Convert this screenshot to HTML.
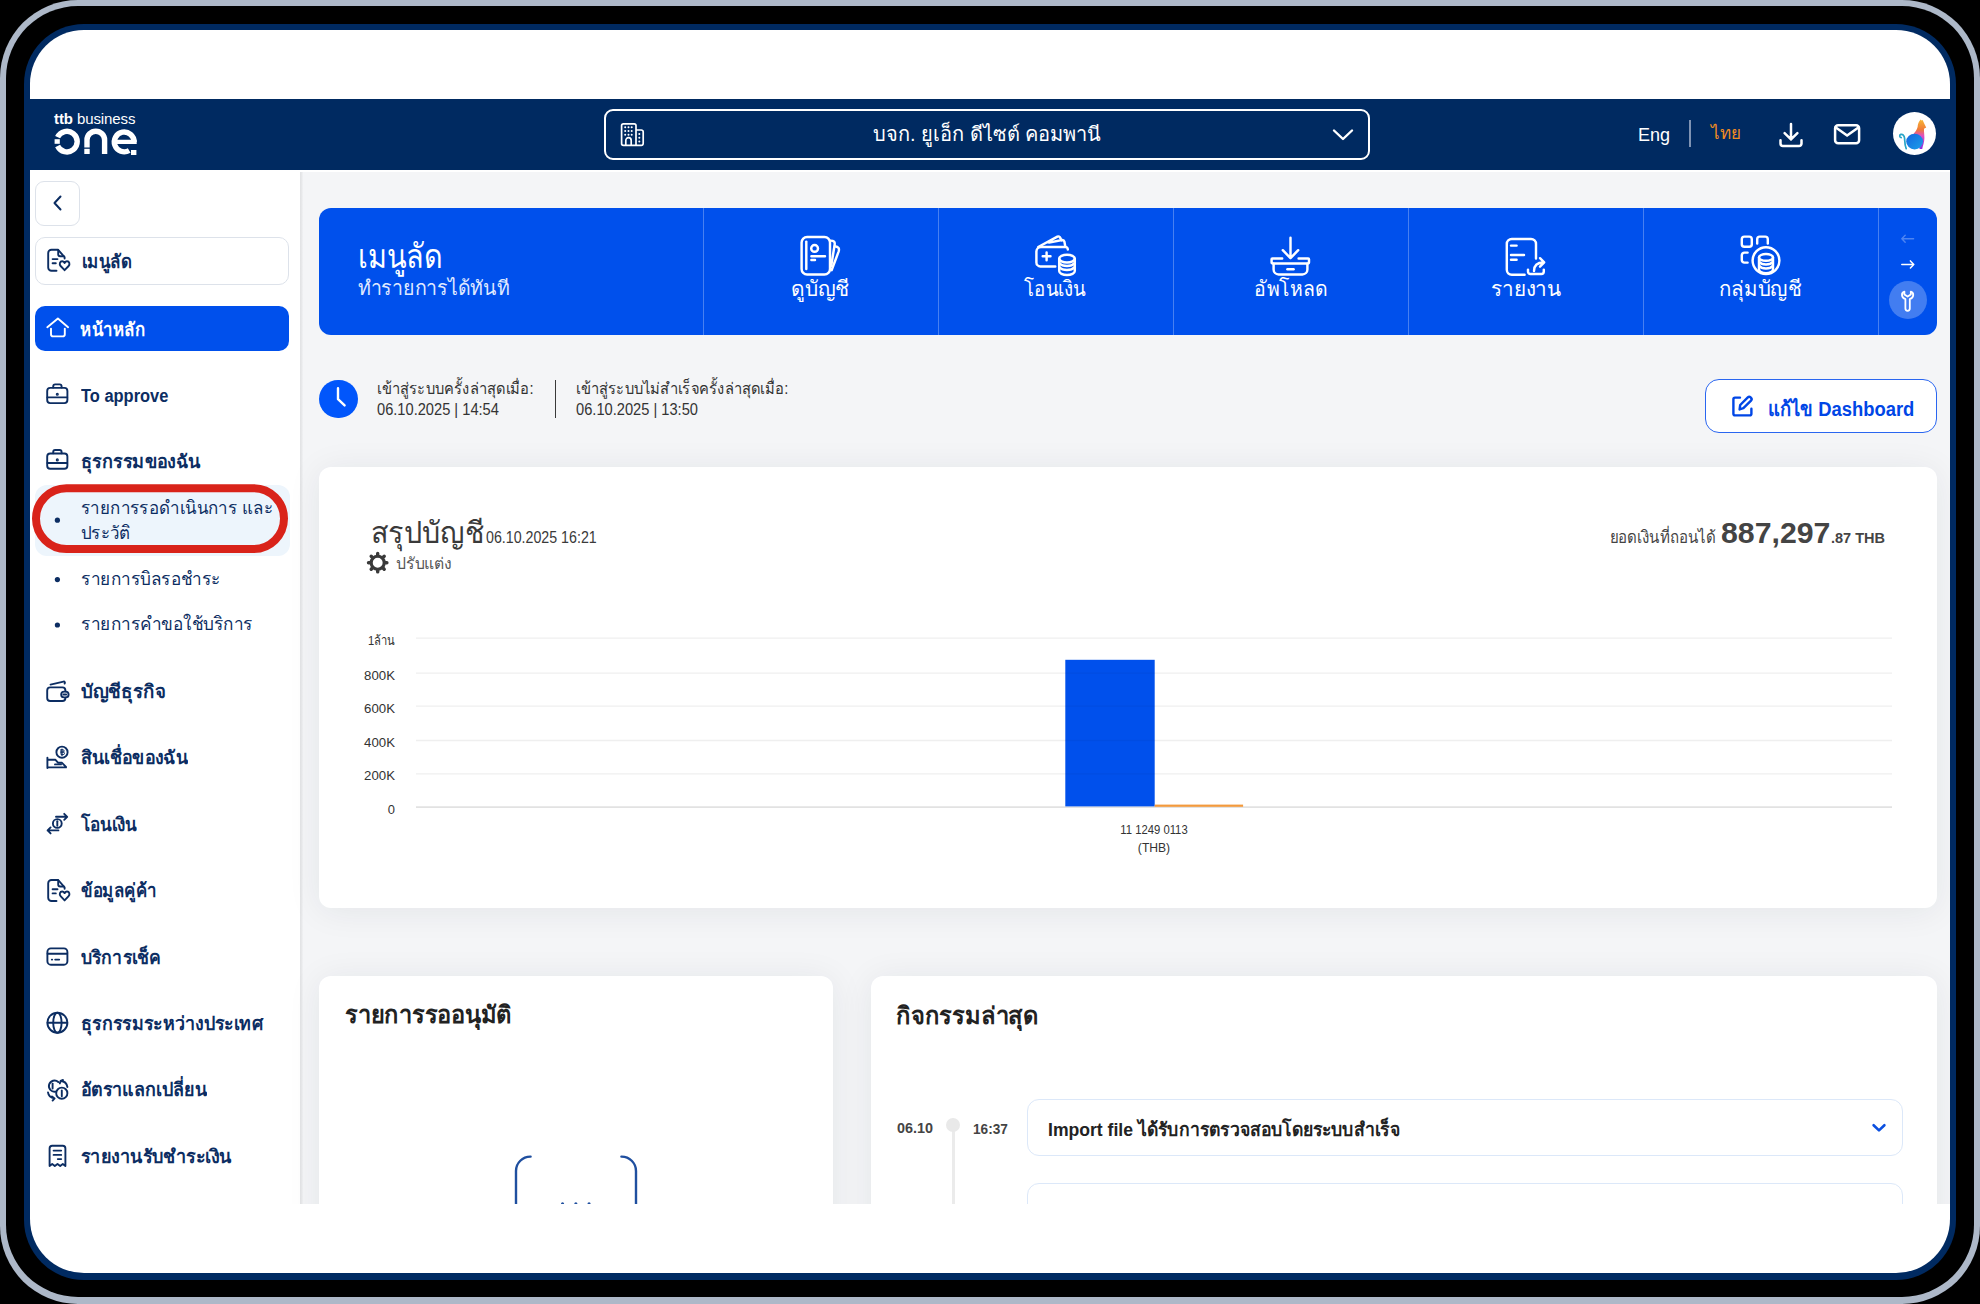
<!DOCTYPE html>
<html><head><meta charset="utf-8">
<style>
*{box-sizing:border-box;margin:0;padding:0}
html,body{width:1980px;height:1304px;overflow:hidden;background:#000}
body{font-family:"Liberation Sans",sans-serif;position:relative}
.a{position:absolute}
#grey{left:0;top:0;width:1980px;height:1304px;border-radius:78px;background:#adb8c8}
#blk{left:6px;top:6px;width:1968px;height:1291px;border-radius:72px;background:#000}
#ring{left:24px;top:24px;width:1932px;height:1256px;border-radius:60px;background:#002a61}
#screen{left:0;top:0;width:1980px;height:1304px;background:#fff;clip-path:inset(30px 30px 31px 30px round 54px)}
#content{left:0;top:0;width:1980px;height:1204px;overflow:hidden}
svg.ov{position:absolute;left:0;top:0}
</style></head>
<body>
<div id="grey" class="a"></div>
<div id="blk" class="a"></div>
<div id="ring" class="a"></div>
<div id="screen" class="a">
<div id="content" class="a">
<div class="a" style="left:30px;top:99px;width:1920px;height:71px;background:#002a61"></div>
<div class="a" style="left:54px;top:110px;width:90px;font-size:15px;font-weight:bold;color:#fff;letter-spacing:-0.1px;white-space:nowrap">ttb <span style="font-weight:normal">business</span></div>
<svg class="a" style="left:54px;top:128px" width="84" height="28" viewBox="0 0 84 28">
  <g fill="none" stroke="#fff" stroke-width="5.4">
    <path d="M3.6 9.2 A10.3 10.3 0 1 1 3.6 18.0"/>
    <path d="M33 19.6 V12 A8.8 8.8 0 0 1 50.6 12 V26"/>
    <path d="M80.1 13.9 A9.9 9.9 0 1 0 75.2 22.5"/><path d="M60 13.9 H82.7" stroke-width="4.2"/>
  </g>
  <rect x="0.6" y="11.2" width="5.2" height="4.6" fill="#fff"/>
  <rect x="30.3" y="20.8" width="5.4" height="5.2" fill="#fff"/>
  <rect x="77" y="22" width="5.4" height="5" fill="#fff"/>
</svg>
<div class="a" style="left:604px;top:109px;width:766px;height:51px;border:2.5px solid #fff;border-radius:9px"></div>
<svg class="a" style="left:612px;top:116px" width="40" height="36" viewBox="612 116 40 36" fill="none" stroke="#fff" stroke-width="1.7" stroke-linecap="round" stroke-linejoin="round">
  <path d="M636 145.4 V125.6 A1.8 1.8 0 0 0 634.2 123.8 H623.4 A1.8 1.8 0 0 0 621.6 125.6 V143.6 A1.8 1.8 0 0 0 623.4 145.4 H641.4 A1.8 1.8 0 0 0 643.2 143.6 V131.8 A1.8 1.8 0 0 0 641.4 130 H636"/>
  <path d="M625.8 145 V140.4 A2.7 2.7 0 0 1 631.2 140.4 V145"/>
  <path d="M625.2 127.3h0.01 M628.5 127.3h0.01 M631.7 127.3h0.01 M625.2 131h0.01 M628.5 131h0.01 M631.7 131h0.01 M625.2 134.8h0.01 M628.5 134.8h0.01 M631.7 134.8h0.01 M639.3 134h0.01 M639.3 137.8h0.01 M639.3 141.5h0.01" stroke-width="2"/>
</svg>
<div class="a" style="left:604px;top:109px;width:766px;height:51px;line-height:51px;text-align:center;color:#fff;font-size:20px">บจก. ยูเอ็ก ดีไซต์ คอมพานี</div>
<svg class="a" style="left:1332px;top:128px" width="22" height="14" viewBox="0 0 22 14" fill="none" stroke="#fff" stroke-width="2.4" stroke-linecap="round" stroke-linejoin="round"><path d="M2 2.5l9 8.5 9-8.5"/></svg>
<div class="a" style="left:1638px;top:123px;font-size:18px;color:#fff;line-height:24px">Eng</div>
<div class="a" style="left:1689px;top:120px;width:2px;height:27px;background:#7f93b3"></div>
<div class="a" style="left:1711px;top:121px;font-size:17px;color:#f08c22;line-height:26px">ไทย</div>
<svg class="a" style="left:1778px;top:122px" width="26" height="26" viewBox="0 0 26 26" fill="none" stroke="#fff" stroke-width="2.5" stroke-linecap="round" stroke-linejoin="round"><path d="M13 2v15.4M6.6 11.2L13 17.4l6.4-6.2M2.5 18.2v3.3a2.5 2.5 0 0 0 2.5 2.5h16a2.5 2.5 0 0 0 2.5-2.5v-3.3"/></svg>
<svg class="a" style="left:1833px;top:122px" width="28" height="24" viewBox="0 0 28 24" fill="none" stroke="#fff" stroke-width="2.5" stroke-linejoin="round"><rect x="2.1" y="3.3" width="24" height="18" rx="3"/><path d="M2.8 5.4L14.1 13.6l11.3-8.2" stroke-linecap="round"/></svg>
<div class="a" style="left:1893px;top:112px;width:43px;height:43px;border-radius:50%;background:#fff;overflow:hidden">
  <svg width="43" height="43" viewBox="1 0 43 43">
    <defs><linearGradient id="cg" x1="0" y1="0" x2="0" y2="1"><stop offset="0" stop-color="#f7b733"/><stop offset="0.35" stop-color="#f07a3a"/><stop offset="0.55" stop-color="#e04fc0"/><stop offset="1" stop-color="#8a2be2"/></linearGradient>
    <linearGradient id="cb" x1="0" y1="0" x2="1" y2="1"><stop offset="0" stop-color="#1565e0"/><stop offset="1" stop-color="#1aa0e8"/></linearGradient></defs>
    <path d="M21 22.5 C23 20 25 18 25.6 15 C25.8 12 26.6 9.5 28.6 7.4 L29.6 8.6 L30.6 8 C31.6 10.4 33 13 34.2 15.6 L32 16.8 C31.8 19 32.4 22 32.4 26 C32.4 30 30.8 34 30.2 37 L27.6 37 C27 33 25 27 21 22.5 Z" fill="url(#cg)"/>
    <ellipse cx="22.6" cy="29.6" rx="8.4" ry="7.8" fill="url(#cb)"/>
    <path d="M14.2 36.6 C12.6 33 12.8 29 12.6 26.4 C12.4 23.6 10.6 21.8 8.8 22.4 C7.2 23 7.4 25.6 9.2 25.6" fill="none" stroke="#2aa6c8" stroke-width="1.7" stroke-linecap="round"/>
  </svg>
</div>
<div class="a" style="left:30px;top:170px;width:270px;height:1034px;background:#fff"></div>
<div class="a" style="left:300px;top:172px;width:1650px;height:1032px;background:#f4f5f7"></div>
<div class="a" style="left:300px;top:172px;width:3px;height:1032px;background:linear-gradient(90deg,#e1e2e4,#e9eaec 70%,rgba(233,234,236,0))"></div>
<div class="a" style="left:35px;top:181px;width:45px;height:45px;border:1.5px solid #dde2ea;border-radius:9px;background:#fff"></div>
<div class="a" style="left:35px;top:237px;width:254px;height:48px;border:1.5px solid #dde2ea;border-radius:10px;background:#fff"></div>
<div class="a" id="t0" style="left:81.8px;top:251.9px;font-size:19px;line-height:19px;color:#0c2d62;font-weight:bold;white-space:nowrap;transform:scale(0.8893,1.0);transform-origin:left 16.1px;">เมนูลัด</div>
<div class="a" style="left:35px;top:306px;width:254px;height:45px;background:#0050ec;border-radius:10px"></div>
<div class="a" id="t1" style="left:80.4px;top:319.9px;font-size:19px;line-height:19px;color:#fff;font-weight:bold;white-space:nowrap;transform:scale(0.8851,1.0);transform-origin:left 16.1px;">หน้าหลัก</div>
<div class="a" id="t2" style="left:80.6px;top:386.8px;font-size:18px;line-height:18px;color:#0c2d62;font-weight:bold;white-space:nowrap;transform:scale(0.9134,1.0);transform-origin:left 15.2px;">To approve</div>
<div class="a" id="t3" style="left:80.6px;top:451.5px;font-size:19px;line-height:19px;color:#0c2d62;font-weight:bold;white-space:nowrap;transform:scale(0.9492,1.0);transform-origin:left 16.1px;">ธุรกรรมของฉัน</div>
<div class="a" style="left:35px;top:485px;width:255px;height:71px;background:#edf5fc;border-radius:12px"></div>
<div class="a" id="t4" style="left:81.0px;top:498.8px;font-size:18px;line-height:18px;color:#0c2d62;font-weight:normal;white-space:nowrap;transform:scale(0.9411,1.0);transform-origin:left 15.2px;">รายการรอดำเนินการ และ</div>
<div class="a" id="t5" style="left:81.0px;top:524.2px;font-size:18px;line-height:18px;color:#0c2d62;font-weight:normal;white-space:nowrap;transform:scale(0.9377,1.0);transform-origin:left 15.2px;">ประวัติ</div>
<div class="a" id="t6" style="left:81.0px;top:569.8px;font-size:18px;line-height:18px;color:#0c2d62;font-weight:normal;white-space:nowrap;transform:scale(0.9523,1.0);transform-origin:left 15.2px;">รายการบิลรอชำระ</div>
<div class="a" id="t7" style="left:81.0px;top:614.8px;font-size:18px;line-height:18px;color:#0c2d62;font-weight:normal;white-space:nowrap;transform:scale(0.9533,1.0);transform-origin:left 15.2px;">รายการคำขอใช้บริการ</div>
<div class="a" id="t8" style="left:80.5px;top:682.1px;font-size:19px;line-height:19px;color:#0c2d62;font-weight:bold;white-space:nowrap;transform:scale(0.9814,1.0);transform-origin:left 16.1px;">บัญชีธุรกิจ</div>
<div class="a" id="t9" style="left:80.5px;top:748.1px;font-size:19px;line-height:19px;color:#0c2d62;font-weight:bold;white-space:nowrap;transform:scale(0.9360,1.0);transform-origin:left 16.1px;">สินเชื่อของฉัน</div>
<div class="a" id="t10" style="left:80.5px;top:814.6px;font-size:19px;line-height:19px;color:#0c2d62;font-weight:bold;white-space:nowrap;transform:scale(0.9000,1.0);transform-origin:left 16.1px;">โอนเงิน</div>
<div class="a" id="t11" style="left:80.5px;top:881.2px;font-size:19px;line-height:19px;color:#0c2d62;font-weight:bold;white-space:nowrap;transform:scale(0.8860,1.0);transform-origin:left 16.1px;">ข้อมูลคู่ค้า</div>
<div class="a" id="t12" style="left:80.5px;top:947.5px;font-size:19px;line-height:19px;color:#0c2d62;font-weight:bold;white-space:nowrap;transform:scale(0.9253,1.0);transform-origin:left 16.1px;">บริการเช็ค</div>
<div class="a" id="t13" style="left:80.5px;top:1013.9px;font-size:19px;line-height:19px;color:#0c2d62;font-weight:bold;white-space:nowrap;transform:scale(0.9376,1.0);transform-origin:left 16.1px;">ธุรกรรมระหว่างประเทศ</div>
<div class="a" id="t14" style="left:80.5px;top:1079.9px;font-size:19px;line-height:19px;color:#0c2d62;font-weight:bold;white-space:nowrap;transform:scale(0.9403,1.0);transform-origin:left 16.1px;">อัตราแลกเปลี่ยน</div>
<div class="a" id="t15" style="left:80.5px;top:1146.6px;font-size:19px;line-height:19px;color:#0c2d62;font-weight:bold;white-space:nowrap;transform:scale(0.9465,1.0);transform-origin:left 16.1px;">รายงานรับชำระเงิน</div>
<div class="a" style="left:319px;top:208px;width:1618px;height:127px;background:#0050ec;border-radius:12px"></div>
<div class="a" style="left:703px;top:208px;width:1px;height:127px;background:rgba(255,255,255,0.28)"></div>
<div class="a" style="left:938px;top:208px;width:1px;height:127px;background:rgba(255,255,255,0.28)"></div>
<div class="a" style="left:1173px;top:208px;width:1px;height:127px;background:rgba(255,255,255,0.28)"></div>
<div class="a" style="left:1408px;top:208px;width:1px;height:127px;background:rgba(255,255,255,0.28)"></div>
<div class="a" style="left:1643px;top:208px;width:1px;height:127px;background:rgba(255,255,255,0.28)"></div>
<div class="a" style="left:1878px;top:208px;width:1px;height:127px;background:rgba(255,255,255,0.28)"></div>
<div class="a" id="t16" style="left:358.0px;top:241.8px;font-size:31px;line-height:31px;color:#fff;font-weight:normal;white-space:nowrap;transform:scale(0.9275,1.08);transform-origin:left 26.2px;">เมนูลัด</div>
<div class="a" id="t17" style="left:358.0px;top:278.1px;font-size:20px;line-height:20px;color:#dfe8ff;font-weight:normal;white-space:nowrap;transform:scale(0.9761,1.0);transform-origin:left 16.9px;">ทำรายการได้ทันที</div>
<div class="a" id="t18" style="left:710.2px;width:220px;text-align:center;top:278.2px;font-size:21px;line-height:21px;color:#fff;font-weight:normal;white-space:nowrap;transform:scale(0.9915,1.0);transform-origin:center 17.8px;">ดูบัญชี</div>
<div class="a" id="t19" style="left:945.4px;width:220px;text-align:center;top:278.2px;font-size:21px;line-height:21px;color:#fff;font-weight:normal;white-space:nowrap;transform:scale(0.8899,1.0);transform-origin:center 17.8px;">โอนเงิน</div>
<div class="a" id="t20" style="left:1180.7px;width:220px;text-align:center;top:278.2px;font-size:21px;line-height:21px;color:#fff;font-weight:normal;white-space:nowrap;transform:scale(0.9241,1.0);transform-origin:center 17.8px;">อัพโหลด</div>
<div class="a" id="t21" style="left:1415.5px;width:220px;text-align:center;top:278.2px;font-size:21px;line-height:21px;color:#fff;font-weight:normal;white-space:nowrap;transform:scale(0.9859,1.0);transform-origin:center 17.8px;">รายงาน</div>
<div class="a" id="t22" style="left:1650.3px;width:220px;text-align:center;top:278.2px;font-size:21px;line-height:21px;color:#fff;font-weight:normal;white-space:nowrap;transform:scale(0.9718,1.0);transform-origin:center 17.8px;">กลุ่มบัญชี</div>
<div class="a" style="left:1888.8px;top:281.3px;width:38px;height:38px;border-radius:50%;background:rgba(255,255,255,0.26)"></div>
<div class="a" style="left:319.2px;top:379.6px;width:38.4px;height:38.4px;border-radius:50%;background:#0156fb"></div>
<div class="a" id="t23" style="left:377.0px;top:380.5px;font-size:16px;line-height:16px;color:#333;font-weight:normal;white-space:nowrap;transform:scale(0.9181,1.0);transform-origin:left 13.5px;">เข้าสู่ระบบครั้งล่าสุดเมื่อ:</div>
<div class="a" id="t24" style="left:377.0px;top:402.0px;font-size:16px;line-height:16px;color:#333;font-weight:normal;white-space:nowrap;transform:scale(0.9154,1.0);transform-origin:left 13.5px;">06.10.2025 | 14:54</div>
<div class="a" style="left:554.5px;top:380px;width:1.5px;height:38px;background:#3a3a3a"></div>
<div class="a" id="t25" style="left:575.6px;top:380.5px;font-size:16px;line-height:16px;color:#333;font-weight:normal;white-space:nowrap;transform:scale(0.9176,1.0);transform-origin:left 13.5px;">เข้าสู่ระบบไม่สำเร็จครั้งล่าสุดเมื่อ:</div>
<div class="a" id="t26" style="left:575.6px;top:402.0px;font-size:16px;line-height:16px;color:#333;font-weight:normal;white-space:nowrap;transform:scale(0.9161,1.0);transform-origin:left 13.5px;">06.10.2025 | 13:50</div>
<div class="a" style="left:1705px;top:379px;width:232px;height:54px;border:1.5px solid #2a66f0;border-radius:14px;background:#fff"></div>
<div class="a" id="t27" style="left:1768.0px;top:398.6px;font-size:20px;line-height:20px;color:#0046e6;font-weight:bold;white-space:nowrap;transform:scale(0.9199,1.0);transform-origin:left 16.9px;">แก้ไข Dashboard</div>
<div class="a" style="left:319px;top:467px;width:1618px;height:441px;background:#fff;border-radius:12px;box-shadow:0 3px 34px rgba(30,40,60,0.075)"></div>
<div class="a" id="t28" style="left:371.0px;top:517.6px;font-size:30px;line-height:30px;color:#3a3a3a;font-weight:normal;white-space:nowrap;transform:scale(0.9576,1.0);transform-origin:left 25.4px;">สรุปบัญชี</div>
<div class="a" id="t29" style="left:486.0px;top:530.1px;font-size:16px;line-height:16px;color:#3a3a3a;font-weight:normal;white-space:nowrap;transform:scale(0.8887,1.0);transform-origin:left 13.5px;">06.10.2025 16:21</div>
<div class="a" id="t30" style="left:396.0px;top:555.5px;font-size:16px;line-height:16px;color:#555;font-weight:normal;white-space:nowrap;transform:scale(0.9825,1.0);transform-origin:left 13.5px;">ปรับแต่ง</div>
<div class="a" id="t31" style="left:1416.0px;width:300px;text-align:right;top:528.6px;font-size:17px;line-height:17px;color:#444;font-weight:normal;white-space:nowrap;transform:scale(0.8867,1.0);transform-origin:right 14.4px;">ยอดเงินที่ถอนได้</div>
<div class="a" id="t32" style="left:1720.8px;top:517.8px;font-size:30px;line-height:30px;color:#444;font-weight:bold;white-space:nowrap;transform:scale(1.0087,1.0);transform-origin:left 25.4px;">887,297</div>
<div class="a" id="t33" style="left:1831.0px;top:531.3px;font-size:14px;line-height:14px;color:#444;font-weight:bold;white-space:nowrap;transform:scale(1.0360,1.0);transform-origin:left 11.9px;">.87 THB</div>
<div class="a" id="t34" style="left:335.3px;width:60px;text-align:right;top:633.7px;font-size:13px;line-height:13px;color:#333;font-weight:normal;white-space:nowrap;transform:scale(0.8612,1.0);transform-origin:right 11.0px;">1ล้าน</div>
<div class="a" id="t35" style="left:335.3px;width:60px;text-align:right;top:668.7px;font-size:13px;line-height:13px;color:#333;font-weight:normal;white-space:nowrap;transform:scale(1.0173,1.0);transform-origin:right 11.0px;">800K</div>
<div class="a" id="t36" style="left:335.3px;width:60px;text-align:right;top:701.7px;font-size:13px;line-height:13px;color:#333;font-weight:normal;white-space:nowrap;transform:scale(1.0173,1.0);transform-origin:right 11.0px;">600K</div>
<div class="a" id="t37" style="left:335.3px;width:60px;text-align:right;top:736.0px;font-size:13px;line-height:13px;color:#333;font-weight:normal;white-space:nowrap;transform:scale(1.0173,1.0);transform-origin:right 11.0px;">400K</div>
<div class="a" id="t38" style="left:335.3px;width:60px;text-align:right;top:769.4px;font-size:13px;line-height:13px;color:#333;font-weight:normal;white-space:nowrap;transform:scale(1.0173,1.0);transform-origin:right 11.0px;">200K</div>
<div class="a" id="t39" style="left:335.3px;width:60px;text-align:right;top:802.7px;font-size:13px;line-height:13px;color:#333;font-weight:normal;white-space:nowrap;transform:scale(0.9952,1.0);transform-origin:right 11.0px;">0</div>
<div class="a" id="t40" style="left:1074.2px;width:160px;text-align:center;top:822.6px;font-size:13px;line-height:13px;color:#333;font-weight:normal;white-space:nowrap;transform:scale(0.8673,1.0);transform-origin:center 11.0px;">11 1249 0113</div>
<div class="a" id="t41" style="left:1074.1px;width:160px;text-align:center;top:840.6px;font-size:13px;line-height:13px;color:#333;font-weight:normal;white-space:nowrap;transform:scale(0.9316,1.0);transform-origin:center 11.0px;">(THB)</div>
<div class="a" style="left:319px;top:976px;width:514px;height:324px;background:#fff;border-radius:12px;box-shadow:0 3px 34px rgba(30,40,60,0.075)"></div>
<div class="a" style="left:871px;top:976px;width:1066px;height:324px;background:#fff;border-radius:12px;box-shadow:0 3px 34px rgba(30,40,60,0.075)"></div>
<div class="a" id="t42" style="left:344.8px;top:1002.7px;font-size:24px;line-height:24px;color:#222;font-weight:bold;white-space:nowrap;transform:scale(0.9835,1.0);transform-origin:left 20.3px;">รายการรออนุมัติ</div>
<div class="a" id="t43" style="left:896.0px;top:1003.7px;font-size:24px;line-height:24px;color:#222;font-weight:bold;white-space:nowrap;transform:scale(0.9862,1.0);transform-origin:left 20.3px;">กิจกรรมล่าสุด</div>
<div class="a" id="t44" style="left:897.0px;top:1119.7px;font-size:15px;line-height:15px;color:#444;font-weight:bold;white-space:nowrap;transform:scale(0.9588,1.0);transform-origin:left 12.7px;">06.10</div>
<div class="a" id="t45" style="left:972.7px;top:1121.3px;font-size:15px;line-height:15px;color:#444;font-weight:bold;white-space:nowrap;transform:scale(0.9094,1.0);transform-origin:left 12.7px;">16:37</div>
<div class="a" style="left:951.5px;top:1125px;width:3.0px;height:85px;background:#ebebeb"></div>
<div class="a" style="left:946px;top:1118px;width:14px;height:14px;border-radius:50%;background:#e9e9e9"></div>
<div class="a" style="left:1027px;top:1099px;width:876px;height:57px;border:1.5px solid #dce8f9;border-radius:12px;background:#fff"></div>
<div class="a" style="left:1027px;top:1183px;width:876px;height:77px;border:1.5px solid #dce8f9;border-radius:12px;background:#fff"></div>
<div class="a" id="t46" style="left:1047.7px;top:1119.9px;font-size:19px;line-height:19px;color:#222;font-weight:bold;white-space:nowrap;transform:scale(0.9255,1.0);transform-origin:left 16.1px;">Import file ได้รับการตรวจสอบโดยระบบสำเร็จ</div>
<svg class="ov" width="1980" height="1304" viewBox="0 0 1980 1304"><path d="M60.5 196.5 L54.5 203 L60.5 209.5" fill="none" stroke="#0c2d62" stroke-width="2" stroke-linecap="round" stroke-linejoin="round"/><g fill="none" stroke="#0c2d62" stroke-width="1.9" stroke-linecap="round" stroke-linejoin="round"><g transform="translate(0,0.0)"><path d="M56.5 270.8 H51.5 A3.3 3.3 0 0 1 48.2 267.5 V253.1 A3.3 3.3 0 0 1 51.5 249.8 H58.2 L64.6 257.2 V258.6"/><path d="M58.2 250 V254.3 A2 2 0 0 0 60.2 256.3 H63.8"/><path d="M52.6 259.1 H57.5 M52.6 263.2 H55.8"/><path d="M64.6 270.2 L60.6 266 C59 264.3 59.8 261.3 62.2 261.3 C63.3 261.3 64 262 64.6 262.9 C65.2 262 65.9 261.3 67 261.3 C69.4 261.3 70.2 264.3 68.6 266 Z"/></g><g transform="translate(0,630.2)"><path d="M56.5 270.8 H51.5 A3.3 3.3 0 0 1 48.2 267.5 V253.1 A3.3 3.3 0 0 1 51.5 249.8 H58.2 L64.6 257.2 V258.6"/><path d="M58.2 250 V254.3 A2 2 0 0 0 60.2 256.3 H63.8"/><path d="M52.6 259.1 H57.5 M52.6 263.2 H55.8"/><path d="M64.6 270.2 L60.6 266 C59 264.3 59.8 261.3 62.2 261.3 C63.3 261.3 64 262 64.6 262.9 C65.2 262 65.9 261.3 67 261.3 C69.4 261.3 70.2 264.3 68.6 266 Z"/></g><g transform="translate(0,0.0)"><rect x="47.2" y="387.9" width="20.2" height="15.2" rx="3"/><path d="M53.2 387.6 V386.4 A2 2 0 0 1 55.2 384.4 H59.6 A2 2 0 0 1 61.6 386.4 V387.6"/><path d="M47.4 397.4 H67.2"/><circle cx="57.3" cy="394.3" r="0.6" fill="#0c2d62"/></g><g transform="translate(0,65.6)"><rect x="47.2" y="387.9" width="20.2" height="15.2" rx="3"/><path d="M53.2 387.6 V386.4 A2 2 0 0 1 55.2 384.4 H59.6 A2 2 0 0 1 61.6 386.4 V387.6"/><path d="M47.4 397.4 H67.2"/><circle cx="57.3" cy="394.3" r="0.6" fill="#0c2d62"/></g><path d="M65.4 691.4 V690.4 A3 3 0 0 0 62.4 687.4 H50.2 A3 3 0 0 0 47.2 690.4 V698 A3 3 0 0 0 50.2 701 H62.4 A3 3 0 0 0 65.4 698 V697.6"/><path d="M50.5 684.6 L63.5 681.6 A1.2 1.2 0 0 1 64.6 683.6"/><rect x="61.2" y="691.6" width="7.4" height="5.8" rx="2.9"/><path d="M63.4 694.5 H66.2"/><circle cx="62" cy="752.2" r="5.6"/><path d="M62 749 V755.4" stroke-width="1.2"/><path d="M61 749.8 H63 A1.1 1.1 0 0 1 63 752.1 H61 M61 752.1 H63.2 A1.2 1.2 0 0 1 63.2 754.6 H61 V749.8" stroke-width="1"/><path d="M47.4 757.8 V768"/><path d="M48 759.8 H55.5 L58.2 762.8 H62 L66 766.8 V767.4 H48"/><path d="M55 764.4 H61"/><circle cx="57.3" cy="823.5" r="4.4"/><path d="M57.3 821.2 V825.8"/><path d="M56 816.8 H67 M64.2 813.8 L67.2 816.8 L64.2 819.8"/><path d="M58.4 830.4 H47.6 M50.6 827.4 L47.6 830.4 L50.6 833.4"/><rect x="47.4" y="948.4" width="20" height="16.3" rx="3.5"/><path d="M47.6 953.8 H67.2"/><path d="M51.8 959.6 H52.2 M55.2 959.6 H59.2"/><circle cx="57.4" cy="1022.7" r="10"/><path d="M47.6 1022.7 H67.2"/><ellipse cx="57.4" cy="1022.7" rx="4.2" ry="10"/><path d="M55.6 1091.6 A5.6 5.6 0 1 1 58.3 1082"/><path d="M52.6 1083.6 V1088.6"/><circle cx="61.8" cy="1093.2" r="5.6"/><path d="M61.8 1090.4 V1096.2"/><path d="M48 1092.4 C48.5 1096 51 1098 54.5 1098.4 M52 1096.4 L54.6 1098.4 L52.6 1100.6"/><path d="M60.8 1081 C64.4 1081.2 66.8 1083.6 67.4 1087 M59.8 1083.4 L60.6 1081 L63 1080"/><path d="M49.6 1166 V1148.4 A2.6 2.6 0 0 1 52.2 1145.8 H62.8 A2.6 2.6 0 0 1 65.4 1148.4 V1166 L62.8 1164 L60.2 1166 L57.5 1164 L54.8 1166 L52.2 1164 Z"/><path d="M53.6 1150.6 H61.2 M53.6 1154.9 H61.2 M57.8 1159.1 H61.2"/></g><g fill="none" stroke="#fff" stroke-width="1.9" stroke-linecap="round" stroke-linejoin="round"><path d="M47.3 327.2 L57.9 318.6 L68.1 327.2"/><path d="M51 328.6 V334.2 A2.2 2.2 0 0 0 53.2 336.4 H62.6 A2.2 2.2 0 0 0 64.8 334.2 V328.6"/></g><g fill="none" stroke="#fff" stroke-width="2.45" stroke-linecap="round" stroke-linejoin="round"><rect x="801.6" y="237" width="28.4" height="37.4" rx="5.5"/><path d="M806.3 241.6 V269"/><circle cx="814.6" cy="248.4" r="3.4"/><path d="M811.4 256.3 H825 M811.4 259.9 H815"/><path d="M830.4 240.6 C834 240.6 835.2 242 834.6 245 L831.2 266"/><path d="M834.8 246.2 C838.6 246.6 839.6 248.6 838.6 251.6 L831.6 270.2"/><path d="M1055.3 266.4 H1040.4 A4 4 0 0 1 1036.4 262.4 V251.6 A4.6 4.6 0 0 1 1041 247 H1065.4 A2.4 2.4 0 0 1 1067.8 249.4"/><path d="M1038.2 247 L1057.4 236.6 A2 2 0 0 1 1060.2 237.8 L1061.6 240.4 M1049 242.6 L1062 240 A2.2 2.2 0 0 1 1064.4 241.6 L1065.2 246"/><path d="M1046.6 252.4 V260.2 M1042.7 256.3 H1050.5"/><ellipse cx="1067" cy="258.6" rx="7.8" ry="3.8"/><path d="M1059.2 258.6 V271 C1059.2 273.2 1062.6 275 1067 275 C1071.4 275 1074.8 273.2 1074.8 271 V258.6"/><path d="M1059.6 263.4 C1061 265 1063.8 266 1067 266 C1070.2 266 1073 265 1074.4 263.4 M1059.6 267.4 C1061 269 1063.8 270 1067 270 C1070.2 270 1073 269 1074.4 267.4"/><path d="M1290.5 237.8 V258 M1282.8 250.2 L1290.5 258.2 L1298.2 250.2"/><path d="M1282.2 258.4 H1272.4 A0.8 0.8 0 0 0 1271.6 259.2 V262.6 A0.8 0.8 0 0 0 1272.4 263.4 H1308.2 A0.8 0.8 0 0 0 1309 262.6 V259.2 A0.8 0.8 0 0 0 1308.2 258.4 H1298.6"/><path d="M1273.6 263.6 V269.4 A5 5 0 0 0 1278.6 274.4 H1302.4 A5 5 0 0 0 1307.4 269.4 V263.6"/><path d="M1287.4 269.2 H1293.6"/><path d="M1536 258.4 V244 A5 5 0 0 0 1531 239 H1511.8 A5 5 0 0 0 1506.8 244 V269.8 A5 5 0 0 0 1511.8 274.8 H1524.6"/><path d="M1511 245.6 H1516.6 M1511 255 H1524 M1511 259.8 H1516.6"/><path d="M1528 269.6 V271.6 A2.4 2.4 0 0 0 1530.4 274 H1541.4 A2.4 2.4 0 0 0 1543.8 271.6 V269.6"/><path d="M1534 271 C1534 265.6 1537 262.4 1543.6 262.4 M1540 258.2 L1544.2 262.4 L1540 266.6"/><rect x="1741.8" y="236.6" width="10" height="10.2" rx="2.6"/><path d="M1757.2 243.4 V239.2 A2.6 2.6 0 0 1 1759.8 236.6 H1765.2 A2.6 2.6 0 0 1 1767.8 239.2 V243.4"/><path d="M1747.6 252.6 H1744.4 A2.6 2.6 0 0 0 1741.8 255.2 V260 A2.6 2.6 0 0 0 1744.4 262.6 H1747.6"/><circle cx="1766" cy="260.6" r="13.4"/><ellipse cx="1766" cy="257.4" rx="7" ry="3.4"/><path d="M1759 257.4 V269.6 C1759 271.6 1762 273.2 1766 273.2 C1770 273.2 1773 271.6 1773 269.6 V257.4"/><path d="M1759.4 262 C1760.6 263.6 1763 264.4 1766 264.4 C1769 264.4 1771.4 263.6 1772.6 262 M1759.4 266 C1760.6 267.6 1763 268.4 1766 268.4 C1769 268.4 1771.4 267.6 1772.6 266"/></g><g fill="none" stroke="rgba(255,255,255,0.3)" stroke-width="1.4" stroke-linecap="round" stroke-linejoin="round"><path d="M1913.6 238.8 H1901.8 M1905.2 235.3 L1901.8 238.8 L1905.2 242.3"/></g><g fill="none" stroke="#fff" stroke-width="1.5" stroke-linecap="round" stroke-linejoin="round"><path d="M1901.8 264.4 H1913.8 M1910.4 260.9 L1913.8 264.4 L1910.4 267.9"/></g><g fill="none" stroke="#fff" stroke-width="1.8" stroke-linecap="round" stroke-linejoin="round"><path d="M1904.4 291.6 C1902.6 292.2 1901.8 293.8 1902 295.4 C1902.2 297 1903.4 298.4 1905.4 299.2 V308.6 A2.2 2.2 0 0 0 1909.8 308.6 V299.2 C1911.8 298.4 1913 297 1913.2 295.4 C1913.4 293.8 1912.6 292.2 1910.8 291.6 V294.4 L1907.6 296.6 L1904.4 294.4 Z"/></g><path d="M338 388.2 V399.2 L344.6 405.4" fill="none" stroke="#fff" stroke-width="2.4" stroke-linecap="round" stroke-linejoin="round"/><g fill="none" stroke="#0046e6" stroke-width="2.4" stroke-linecap="round" stroke-linejoin="round"><path d="M1740 397.6 H1735 A1.6 1.6 0 0 0 1733.4 399.2 V413.8 A1.6 1.6 0 0 0 1735 415.4 H1749.8 A1.6 1.6 0 0 0 1751.4 413.8 V408.8"/><path d="M1739.6 409.4 L1740.2 405 L1747.8 397.4 A2 2 0 0 1 1750.6 397.4 L1751 397.8 A2 2 0 0 1 1751 400.6 L1743.4 408.2 Z"/></g><g fill="none" stroke="#3a3a3a"><circle cx="377.7" cy="562.7" r="6.5" stroke-width="3.1"/><path d="M377.70 555.50 L377.70 553.50 M382.79 557.61 L384.21 556.19 M384.90 562.70 L386.90 562.70 M382.79 567.79 L384.21 569.21 M377.70 569.90 L377.70 571.90 M372.61 567.79 L371.19 569.21 M370.50 562.70 L368.50 562.70 M372.61 557.61 L371.19 556.19" stroke-width="3.4" stroke-linecap="round"/></g><path d="M416 638.2 H1892" stroke="#efefef" stroke-width="1.3"/><path d="M416 673.2 H1892" stroke="#efefef" stroke-width="1.3"/><path d="M416 706.2 H1892" stroke="#efefef" stroke-width="1.3"/><path d="M416 740.5 H1892" stroke="#efefef" stroke-width="1.3"/><path d="M416 773.9 H1892" stroke="#efefef" stroke-width="1.3"/><path d="M416 807.2 H1892" stroke="#e2e2e2" stroke-width="1.8"/><rect x="1065.3" y="659.8" width="89.4" height="146.6" fill="#0050ec"/><path d="M1065.3 673.2 H1154.7" stroke="rgba(0,0,0,0.04)" stroke-width="1.3"/><path d="M1065.3 706.2 H1154.7" stroke="rgba(0,0,0,0.04)" stroke-width="1.3"/><path d="M1065.3 740.5 H1154.7" stroke="rgba(0,0,0,0.04)" stroke-width="1.3"/><path d="M1065.3 773.9 H1154.7" stroke="rgba(0,0,0,0.04)" stroke-width="1.3"/><rect x="1154.7" y="804.6" width="88.4" height="2.2" fill="#f39a3c"/><g fill="none" stroke="#1f4f9f" stroke-width="2.4" stroke-linecap="round"><path d="M530.6 1156.6 A14.4 14.4 0 0 0 516 1171 V1206"/><path d="M621.4 1156.6 A14.4 14.4 0 0 1 636 1171 V1206"/><path d="M562.5 1203.8 h0.1 M575.8 1203.8 h0.1 M589 1203.8 h0.1" stroke-width="3"/></g><path d="M1873.6 1125.2 L1879 1130.4 L1884.4 1125.2" fill="none" stroke="#0a4fe0" stroke-width="2.6" stroke-linecap="round" stroke-linejoin="round"/><circle cx="57.4" cy="520.2" r="2.6" fill="#0c2d62"/><circle cx="57.4" cy="579.6" r="2.6" fill="#0c2d62"/><circle cx="57.4" cy="625" r="2.6" fill="#0c2d62"/><rect x="36" y="488.2" width="248" height="60.8" rx="30.4" fill="none" stroke="#d9231a" stroke-width="8"/></svg></div>
</div>

</body></html>
